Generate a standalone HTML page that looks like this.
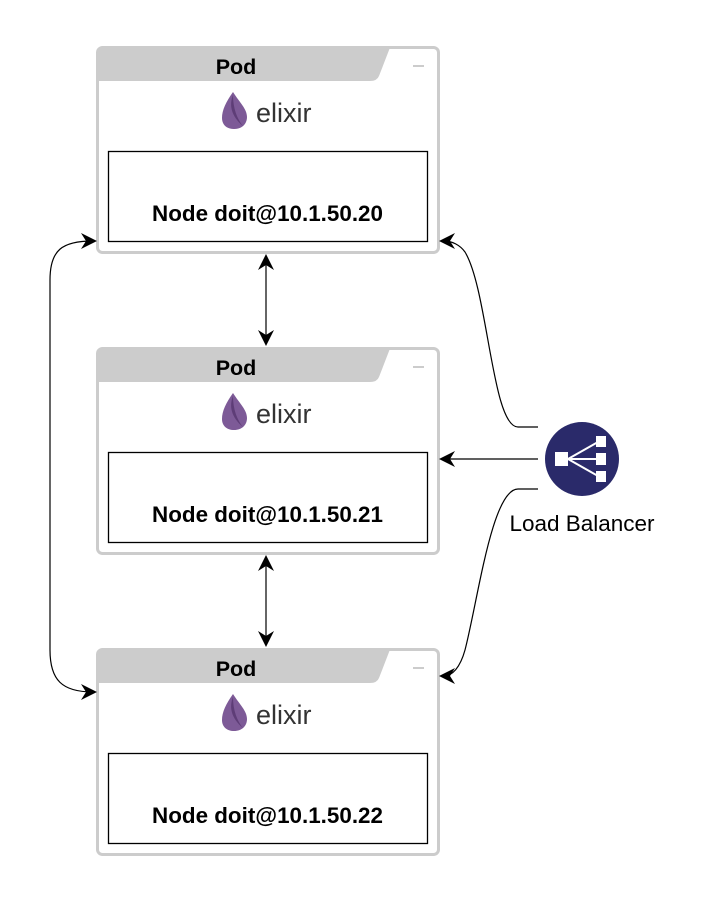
<!DOCTYPE html>
<html><head><style>body{margin:0;background:#fff}svg{display:block}</style></head><body>
<svg width="704" height="903" viewBox="0 0 704 903" xmlns="http://www.w3.org/2000/svg" font-family="Liberation Sans, sans-serif">
<g id="p0">
<rect x="97.5" y="47.5" width="341" height="205" rx="5" fill="#fff" stroke="#ccc" stroke-width="3"/>
<path d="M97.5,81 L97.5,52 Q97.5,47.5 102,47.5 L390,47.5 L379,76 Q377,81 370,81 Z" fill="#ccc"/>
<text x="236" y="74" font-size="21.5" font-weight="bold" text-anchor="middle">Pod</text>
<line x1="413" y1="66" x2="424" y2="66" stroke="#bbb" stroke-width="1.5"/>
<path d="M233,92 C226,102 222,110 222,118 C222,125 227,129 234,129 C242,129 247,124 247,117 C247,109 240,103 233,92 Z" fill="#7d5a97"/>
<path d="M233,95 C229,105 231,116 243,126 C237,119 233,108 233,95 Z" fill="#4a2a63" opacity=".6"/>
<text x="256" y="122" font-size="27" fill="#333">elixir</text>
<rect x="108.5" y="151.5" width="319" height="90" fill="#fff" stroke="#000" stroke-width="1.3"/>
<text x="267.5" y="221" font-size="22.4" font-weight="bold" text-anchor="middle">Node doit@10.1.50.20</text>
</g>
<g transform="translate(0,301)"><rect x="97.5" y="47.5" width="341" height="205" rx="5" fill="#fff" stroke="#ccc" stroke-width="3"/>
<path d="M97.5,81 L97.5,52 Q97.5,47.5 102,47.5 L390,47.5 L379,76 Q377,81 370,81 Z" fill="#ccc"/>
<text x="236" y="74" font-size="21.5" font-weight="bold" text-anchor="middle">Pod</text>
<line x1="413" y1="66" x2="424" y2="66" stroke="#bbb" stroke-width="1.5"/>
<path d="M233,92 C226,102 222,110 222,118 C222,125 227,129 234,129 C242,129 247,124 247,117 C247,109 240,103 233,92 Z" fill="#7d5a97"/>
<path d="M233,95 C229,105 231,116 243,126 C237,119 233,108 233,95 Z" fill="#4a2a63" opacity=".6"/>
<text x="256" y="122" font-size="27" fill="#333">elixir</text>
<rect x="108.5" y="151.5" width="319" height="90" fill="#fff" stroke="#000" stroke-width="1.3"/>
<text x="267.5" y="221" font-size="22.4" font-weight="bold" text-anchor="middle">Node doit@10.1.50.21</text></g>
<g transform="translate(0,602)"><rect x="97.5" y="47.5" width="341" height="205" rx="5" fill="#fff" stroke="#ccc" stroke-width="3"/>
<path d="M97.5,81 L97.5,52 Q97.5,47.5 102,47.5 L390,47.5 L379,76 Q377,81 370,81 Z" fill="#ccc"/>
<text x="236" y="74" font-size="21.5" font-weight="bold" text-anchor="middle">Pod</text>
<line x1="413" y1="66" x2="424" y2="66" stroke="#bbb" stroke-width="1.5"/>
<path d="M233,92 C226,102 222,110 222,118 C222,125 227,129 234,129 C242,129 247,124 247,117 C247,109 240,103 233,92 Z" fill="#7d5a97"/>
<path d="M233,95 C229,105 231,116 243,126 C237,119 233,108 233,95 Z" fill="#4a2a63" opacity=".6"/>
<text x="256" y="122" font-size="27" fill="#333">elixir</text>
<rect x="108.5" y="151.5" width="319" height="90" fill="#fff" stroke="#000" stroke-width="1.3"/>
<text x="267.5" y="221" font-size="22.4" font-weight="bold" text-anchor="middle">Node doit@10.1.50.22</text></g>
<g fill="none" stroke="#000" stroke-width="1.2">
<line x1="266" y1="258" x2="266" y2="342"/>
<line x1="266" y1="559" x2="266" y2="643"/>
<path d="M93,241 C62,241 50,250 50,280 L50,650 C50,680 62,692 93,692"/>
<path d="M538,427 L518,427 C492,427 488,290 465,252 C460,245 452,241 444,241"/>
<line x1="538" y1="459" x2="444" y2="459"/>
<path d="M538,489 L518,489 C492,489 478,600 465,650 C460,668 452,676 444,676"/>
</g>
<g fill="#000">
<path d="M266,254 L258,270 L266,265 L274,270 Z"/>
<path d="M266,346 L258,330 L266,335 L274,330 Z"/>
<path d="M266,555 L258,571 L266,566 L274,571 Z"/>
<path d="M266,647 L258,631 L266,636 L274,631 Z"/>
<path d="M97,241 L81,233 L86,241 L81,249 Z"/>
<path d="M97,692 L81,684 L86,692 L81,700 Z"/>
<path d="M439,241 L455,233 L450,241 L455,249 Z"/>
<path d="M439,459 L455,451 L450,459 L455,467 Z"/>
<path d="M439,676 L455,668 L450,676 L455,684 Z"/>
</g>
<circle cx="582" cy="459" r="37" fill="#2a2a6a"/>
<g fill="#fff" stroke="#fff">
<rect x="555" y="452" width="13" height="14" stroke="none"/>
<line x1="568" y1="459" x2="598" y2="442" stroke-width="2"/>
<line x1="568" y1="459" x2="598" y2="459" stroke-width="2"/>
<line x1="568" y1="459" x2="598" y2="476" stroke-width="2"/>
<rect x="596" y="436" width="10" height="11" stroke="none"/>
<rect x="596" y="453" width="10" height="12" stroke="none"/>
<rect x="596" y="471" width="10" height="11" stroke="none"/>
</g>
<text x="582" y="531" font-size="22.5" text-anchor="middle">Load Balancer</text>
</svg>
</body></html>
